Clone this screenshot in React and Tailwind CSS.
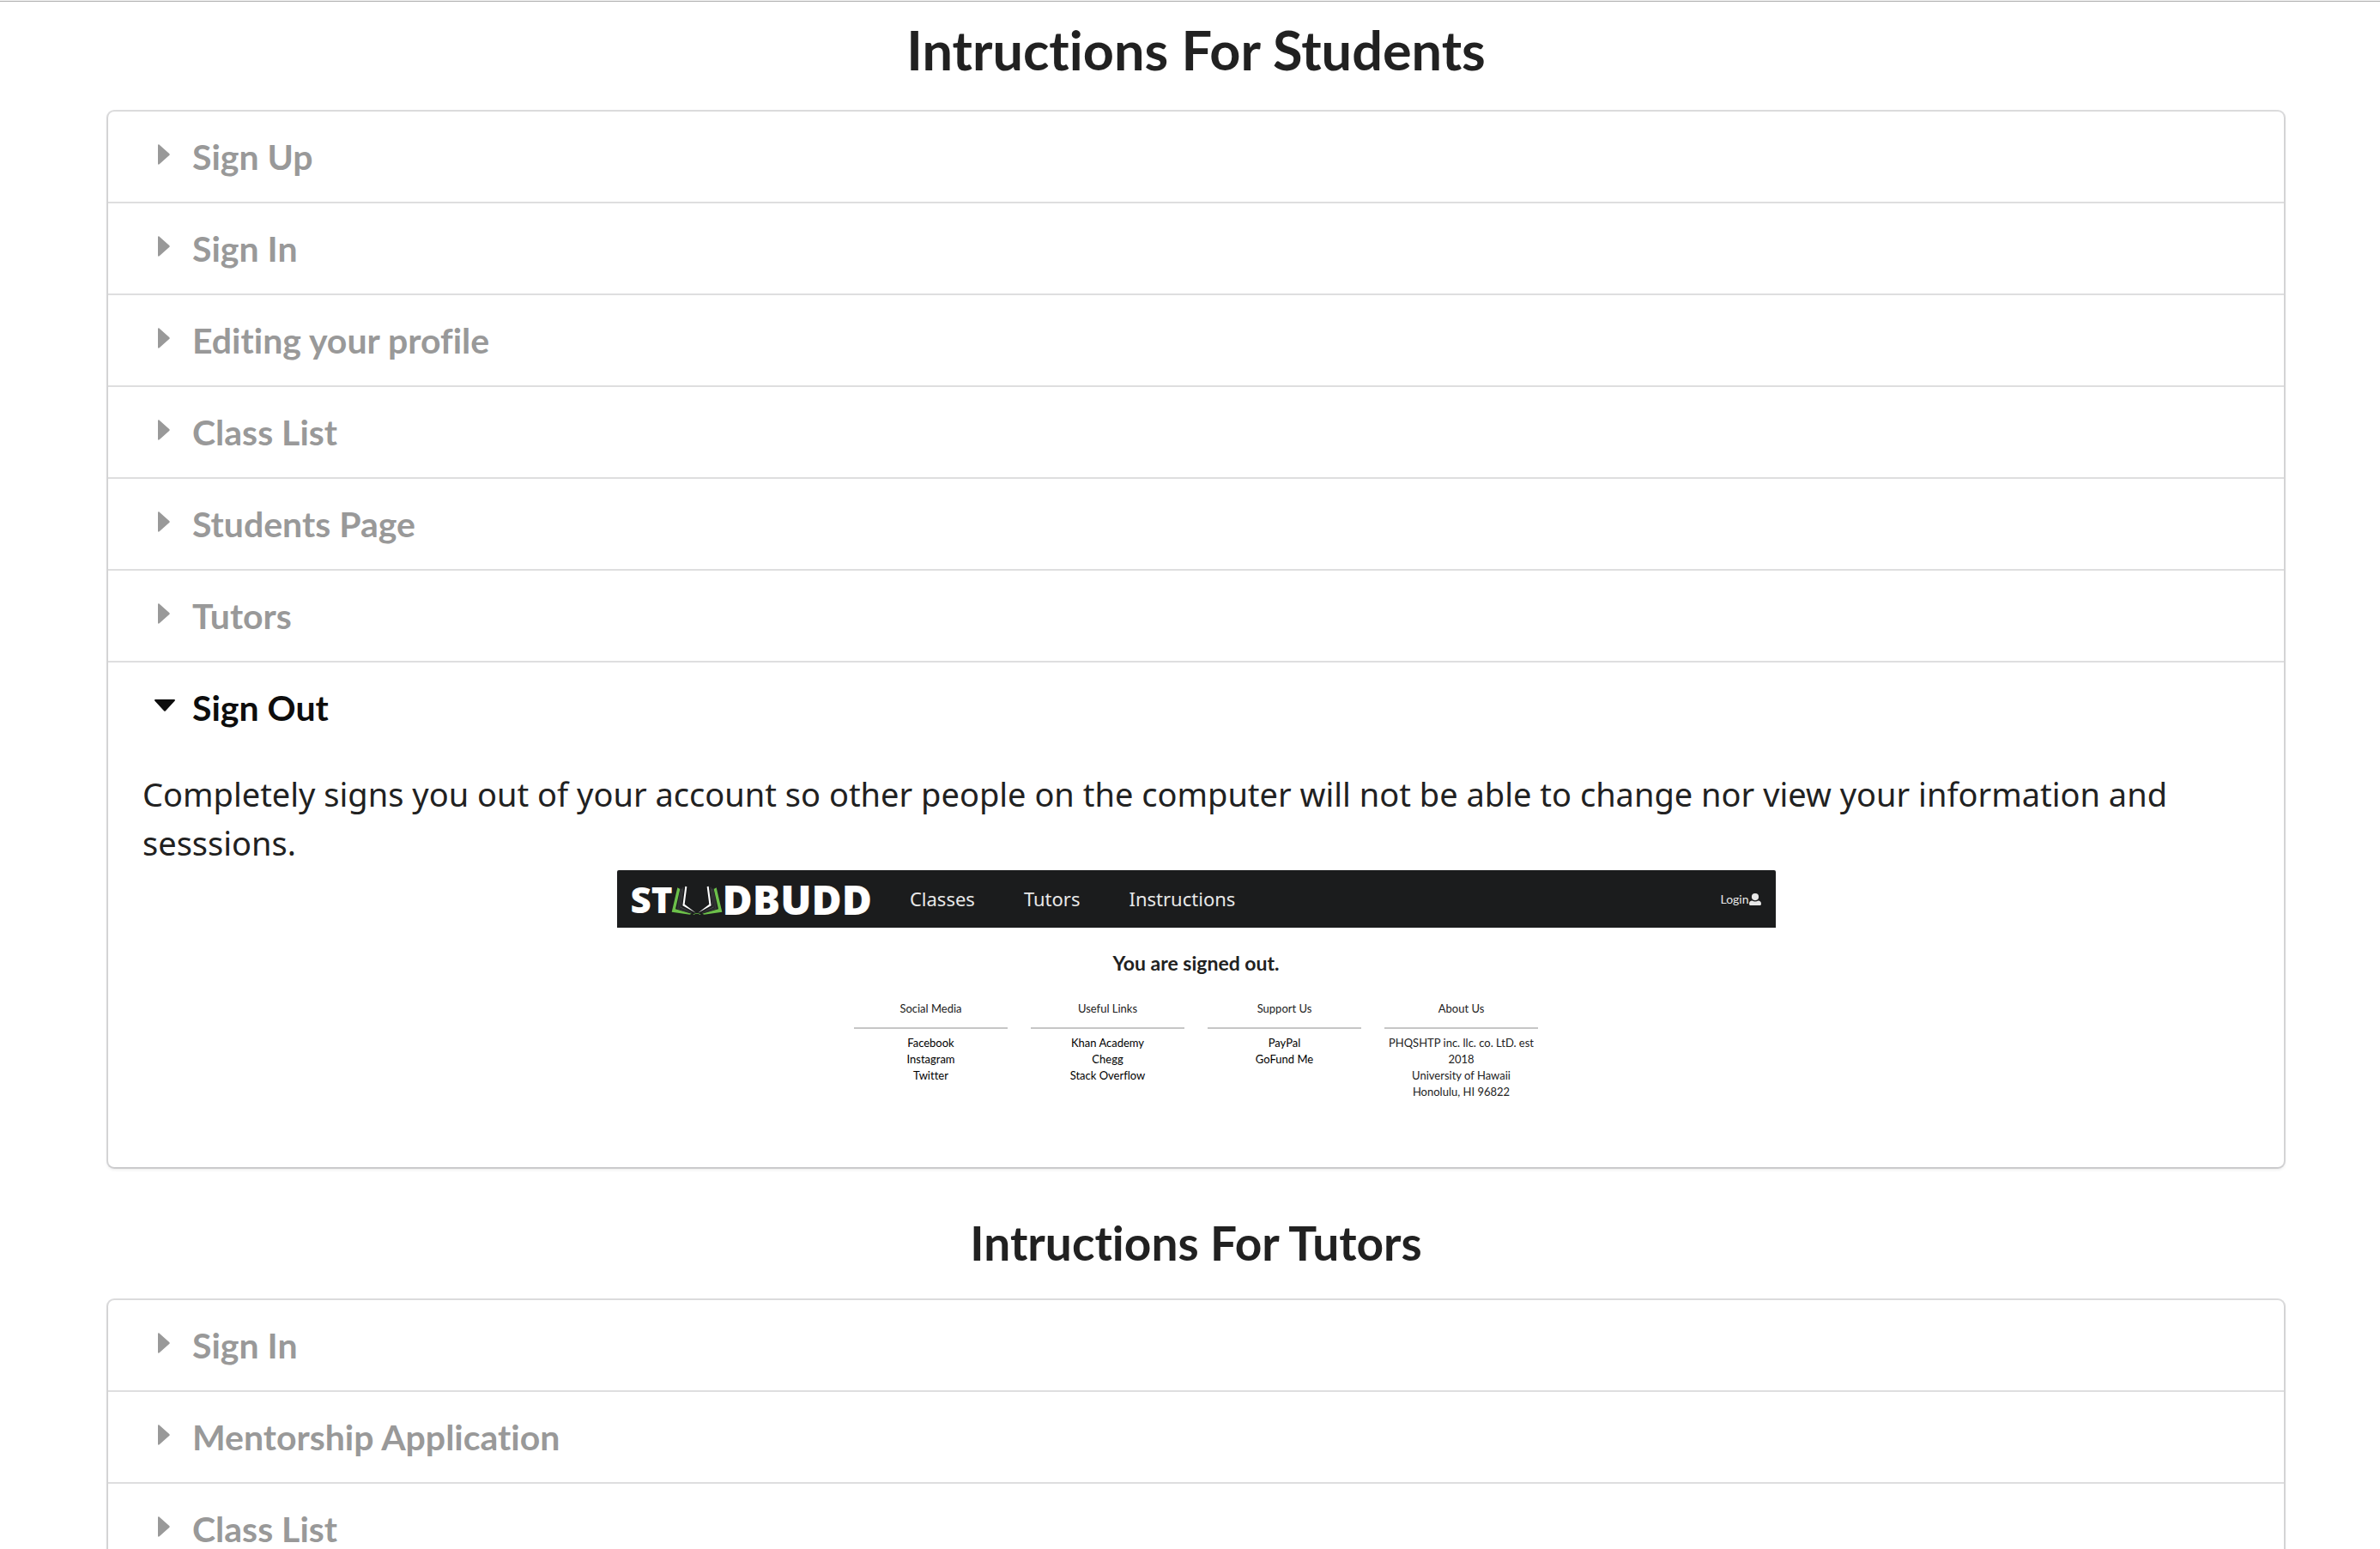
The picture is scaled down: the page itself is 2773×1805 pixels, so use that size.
import { useState } from "react";

const studentTopics = [
  { title: "Sign Up" },
  { title: "Sign In" },
  { title: "Editing your profile" },
  { title: "Class List" },
  { title: "Students Page" },
  { title: "Tutors" },
  {
    title: "Sign Out",
    text: "Completely signs you out of your account so other people on the computer will not be able to change nor view your information and sesssions.",
    preview: true,
  },
];

const tutorTopics = [
  { title: "Sign In" },
  { title: "Mentorship Application" },
  { title: "Class List" },
];

const footerColumns = [
  { heading: "Social Media", links: ["Facebook", "Instagram", "Twitter"] },
  { heading: "Useful Links", links: ["Khan Academy", "Chegg", "Stack Overflow"] },
  { heading: "Support Us", links: ["PayPal", "GoFund Me"] },
  {
    heading: "About Us",
    lines: ["PHQSHTP inc. llc. co. LtD. est 2018", "University of Hawaii", "Honolulu, HI 96822"],
  },
];

function Caret({ open }) {
  return (
    <span className="mb-1.5 flex h-6 w-11 shrink-0 items-center pl-1">
      {open ? (
        <svg viewBox="0 0 24 14" className="-ml-1 h-3.5 w-6" fill="currentColor" aria-hidden="true">
          <path d="M1.2 0h21.6c1 0 1.5 1 .8 1.8L13 13.2c-.6.7-1.4.7-2 0L.4 1.8C-.3 1 .2 0 1.2 0z" />
        </svg>
      ) : (
        <svg viewBox="0 0 14 24" className="h-6 w-3.5" fill="currentColor" aria-hidden="true">
          <path d="M0 1.2C0 .2 1 0 1.7.7l11.5 10.2c.7.7.7 1.5 0 2.2L1.7 23.3C1 24 0 23.8 0 22.8z" />
        </svg>
      )}
    </span>
  );
}

function BookIcon() {
  return (
    <svg viewBox="180 22 180 114" className="-ml-0.5 h-[38px] w-[60px]" aria-hidden="true">
      <g fill="#6cc04a">
        <path d="M202 38l9 5-16 70 56 16-6 3-63-9z" />
        <path d="M338 38l-9 5 16 70-56 16 6 3 63-9z" />
        <path d="M256 132q14-10 28 0l-3 1q-11-7-22 0z" />
      </g>
      <g fill="#313234">
        <path d="M212 40l8 3-12 66 46 17-4 2-50-15z" />
        <path d="M328 40l-8 3 12 66-46 17 4 2 50-15z" />
      </g>
      <g fill="#48494b">
        <path d="M221 36l2 1-9 68 45 21-48-18z" />
        <path d="M319 36l-2 1 9 68-45 21 48-18z" />
      </g>
      <g fill="#ffffff">
        <path d="M229 33l6 2-8 61 39 30-46-25z" />
        <path d="M311 33l-6 2 8 61-39 30 46-25z" />
      </g>
    </svg>
  );
}

function UserIcon() {
  return (
    <svg viewBox="0 0 14 14" className="size-3.5" fill="currentColor" aria-hidden="true">
      <circle cx="7" cy="4.1" r="4.1" />
      <path d="M0 12.2C0 9.8 1.5 8.5 3.4 8.5 5.5 9.7 8.5 9.7 10.6 8.5 12.5 8.5 14 9.8 14 12.2 14 13.2 13.4 14 12.4 14H1.6C.6 14 0 13.2 0 12.2z" />
    </svg>
  );
}

function SitePreview() {
  return (
    <div className="mx-auto mt-[3px] flex w-[1350px] max-w-full flex-col">
      <nav className="flex h-[67px] items-center rounded-t-xs bg-[#1b1c1d] pr-[17px] pl-4 text-white">
        <a
          href="#home"
          className="flex items-center font-['Open_Sans',sans-serif] text-[48px] leading-[67px] font-extrabold"
          aria-label="STUDBUDD"
        >
          <span className="text-[42px]">ST</span>
          <BookIcon />
          <span>DBUDD</span>
        </a>
        <div className="ml-11 flex gap-[57px] font-['Noto_Sans',sans-serif] text-[22px] text-[#e8e8e8]">
          <a href="#classes">Classes</a>
          <a href="#tutors">Tutors</a>
          <a href="#instructions">Instructions</a>
        </div>
        <a href="#login" className="ml-auto flex items-center text-sm text-[#e8e8e8]">
          Login
          <UserIcon />
        </a>
      </nav>
      <h3 className="mt-[26px] text-center text-[23px] leading-[30px] font-bold">You are signed out.</h3>
      <div className="mx-auto mt-7 grid grid-cols-4 gap-[27px] text-center text-[13px] leading-[19px]">
        {footerColumns.map((col) => (
          <section key={col.heading} className="w-[179px]">
            <h4 className="border-b-2 border-[#c6c6c6] pb-3 leading-5">{col.heading}</h4>
            <div className="flex flex-col items-center pt-[7px] text-[#222222]">
              {col.links?.map((l) => (
                <a key={l} href="#link" className="text-black">
                  {l}
                </a>
              ))}
              {col.lines?.map((l) => (
                <p key={l}>{l}</p>
              ))}
            </div>
          </section>
        ))}
      </div>
    </div>
  );
}

function Accordion({ id, items, initial }) {
  const [active, setActive] = useState(initial);
  return (
    <div className="rounded-[7px] shadow-[0_2px_4px_0_rgba(34,36,38,0.15),0_0_0_2px_rgba(34,36,38,0.15)]">
      {items.map((item, i) => {
        const open = active === i;
        return (
          <div key={item.title} className="border-t-2 border-[#dededf] first:border-t-0">
            <h2>
              <button
                type="button"
                aria-expanded={open}
                aria-controls={`${id}-${i}`}
                onClick={() => setActive(open ? -1 : i)}
                className={
                  open
                    ? "flex w-full cursor-pointer items-center px-[54px] py-6 text-left text-[41px] leading-[57px] font-bold text-[#0d0d0d]"
                    : "flex w-full cursor-pointer items-center px-[54px] py-6 text-left text-[41px] leading-[57px] font-bold text-[#999999]"
                }
              >
                <Caret open={open} />
                {item.title}
              </button>
            </h2>
            {open && item.text && (
              <div id={`${id}-${i}`} className="px-10 pt-5 pb-[78px]">
                <p className="font-['Noto_Sans',sans-serif] text-[38px] leading-[57px]">{item.text}</p>
                {item.preview && <SitePreview />}
              </div>
            )}
          </div>
        );
      })}
    </div>
  );
}

export default function App() {
  return (
    <div className="min-h-screen bg-white font-['Lato',sans-serif] text-[#212121] [font-variant-ligatures:no-common-ligatures]">
      <div className="h-0.5 border-b border-[#b0b0b0] bg-[#f4f4f4]" />
      <main className="pr-28 pl-[126px]">
        <h1 className="mt-[15px] mb-8 text-center text-[63px] leading-[81px] font-bold">
          Intructions For Students
        </h1>
        <Accordion id="students" items={studentTopics} initial={6} />
        <h1 className="mt-[53px] mb-8 text-center text-[55px] leading-[70px] font-bold">
          Intructions For Tutors
        </h1>
        <Accordion id="tutors" items={tutorTopics} initial={-1} />
      </main>
    </div>
  );
}
